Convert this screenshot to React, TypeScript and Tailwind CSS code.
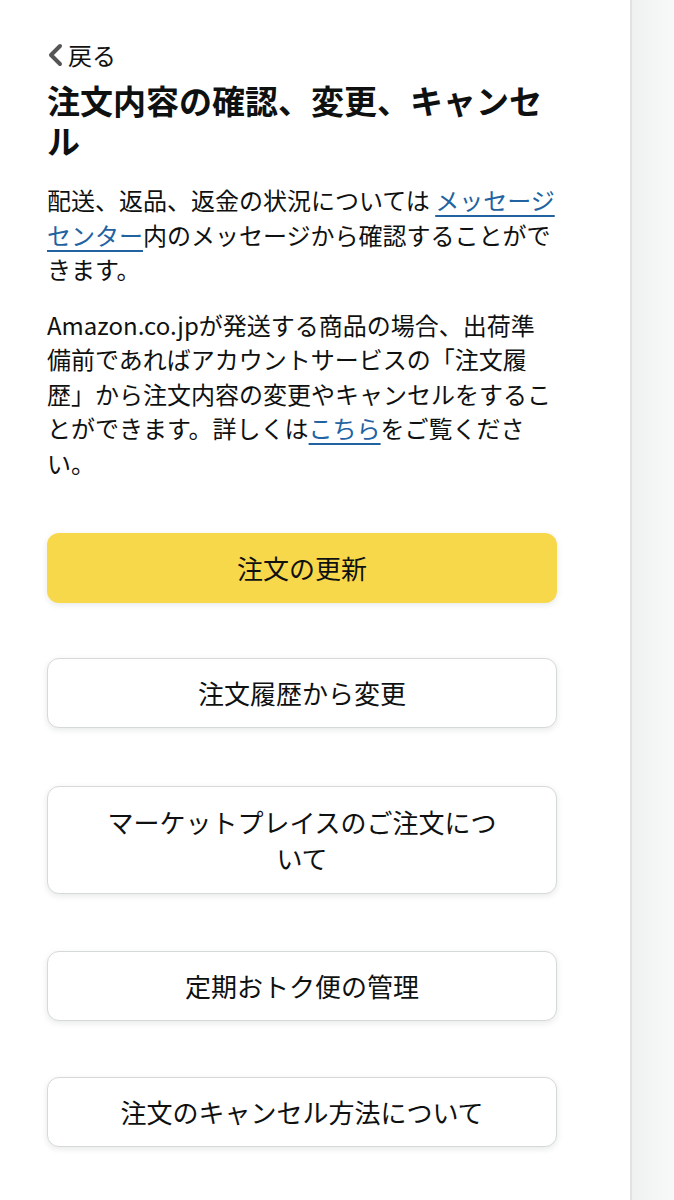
import React from "react";

const font = { fontFamily: '"Noto Sans CJK JP", "Noto Sans", sans-serif' };

function Btn({ children, primary, className = "" }: { children: React.ReactNode; primary?: boolean; className?: string }) {
  return (
    <button
      className={
        (primary
          ? "w-[510px] rounded-[12px] bg-[#f8d84b] px-[55px] py-[17px] text-[26px] leading-[36px] text-[#0f1111] shadow-[0_2px_6px_rgba(213,217,217,0.6)] "
          : "w-[510px] rounded-[12px] border border-[#d5d9d9] bg-white px-[55px] text-[26px] leading-[36px] text-[#0f1111] shadow-[0_2px_6px_rgba(213,217,217,0.6)] ") +
        className
      }
    >
      {children}
    </button>
  );
}

export default function App() {
  return (
    <div className="flex min-h-[1200px] w-[674px] bg-white" style={font}>
      <div className="w-[630px] pl-[47px] pt-[39px]">
        <div className="flex h-[32px] items-center">
          <svg width="17" height="24" viewBox="0 0 17 24" className="mr-[4px]">
            <polyline points="13,3 4,12 13,21" fill="none" stroke="#555" strokeWidth="4" strokeLinecap="round" strokeLinejoin="round" />
          </svg>
          <span className="text-[24px] leading-[32px] text-[#111]">戻る</span>
        </div>
        <h1 className="mt-[9px] w-[510px] text-[33px] font-bold leading-[40px] text-[#0f1111]">
          注文内容の確認、変更、キャンセル
        </h1>
        <p className="mt-[23px] w-[520px] text-[24px] leading-[34.5px] text-[#0f1111]">
          配送、返品、返金の状況については{" "}
          <a className="text-[#2162a1] underline decoration-[1.5px] underline-offset-[5px]">メッセージ<br />センター</a>
          内のメッセージから確認することがで
          <br />
          きます。
        </p>
        <p className="mt-[21px] w-[520px] text-[24px] leading-[34.5px] text-[#0f1111]">
          Amazon.co.jpが発送する商品の場合、出荷準
          <br />
          備前であればアカウントサービスの「注文履
          <br />
          歴」から注文内容の変更やキャンセルをするこ
          <br />
          とができます。詳しくは
          <a className="text-[#2162a1] underline decoration-[1.5px] underline-offset-[5px]">こちら</a>
          をご覧くださ
          <br />
          い。
        </p>
        <div className="mt-[53px] flex flex-col">
          <Btn primary>注文の更新</Btn>
          <Btn className="mt-[55px] py-[16px]">注文履歴から変更</Btn>
          <Btn className="mt-[58px] py-[17px]">マーケットプレイスのご注文について</Btn>
          <Btn className="mt-[57px] py-[16px]">定期おトク便の管理</Btn>
          <Btn className="mt-[56px] py-[16px]">注文のキャンセル方法について</Btn>
        </div>
      </div>
      <div className="w-[44px] border-l-2 border-[#e2e2e2] bg-gradient-to-r from-[#eff0f0] to-[#f8f9f9]" />
    </div>
  );
}
